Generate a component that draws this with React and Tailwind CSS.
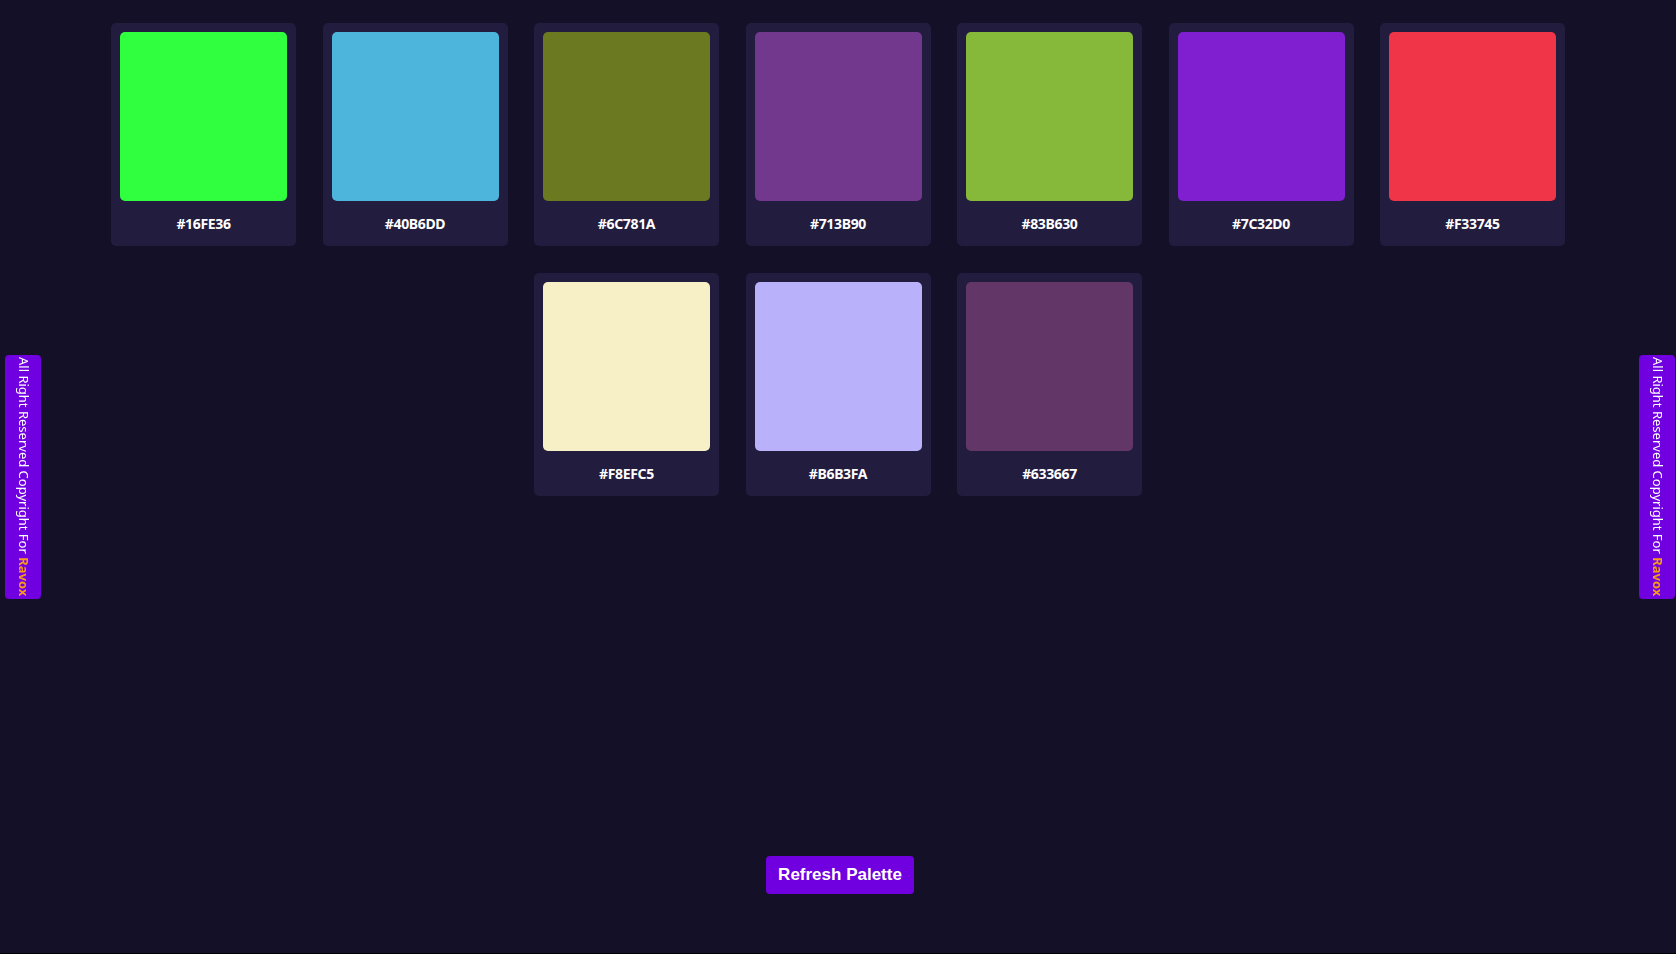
import React from "react";

const palette = [
  { hex: "#16FE36", shown: "#2fff3e" },
  { hex: "#40B6DD", shown: "#4db5dc" },
  { hex: "#6C781A", shown: "#6b7a20" },
  { hex: "#713B90", shown: "#72388e" },
  { hex: "#83B630", shown: "#86b83a" },
  { hex: "#7C32D0", shown: "#7f1fd0" },
  { hex: "#F33745", shown: "#f03548" },
  { hex: "#F8EFC5", shown: "#f7f0c7" },
  { hex: "#B6B3FA", shown: "#b9b2fa" },
  { hex: "#633667", shown: "#633668" },
];

function SideNote({ side }) {
  return (
    <div
      className={`fixed top-1/2 -translate-y-1/2 ${
        side === "left" ? "left-[5px]" : "right-px"
      } w-[36px] h-[244px] rounded-[4px] bg-[#7000e0] flex items-center justify-center`}
    >
      <span className="[writing-mode:vertical-rl] text-[13px] leading-none text-white font-['Noto_Sans',sans-serif] whitespace-nowrap">
        All Right Reserved Copyright For{" "}
        <span className="font-bold text-[#f89a1c]">Ravox</span>
      </span>
    </div>
  );
}

export default function App() {
  return (
    <div className="min-h-screen h-[954px] bg-[#131027] border-b border-black flex flex-col font-['Noto_Sans',sans-serif]">
      {/* Palette grid */}
      <div className="flex flex-wrap justify-center gap-x-[26.5px] gap-y-[27px] pt-[23px] px-[100px]">
        {palette.map((c) => (
          <div
            key={c.hex}
            className="w-[185px] h-[223px] rounded-[5px] bg-[#221c3e] p-[9px] flex flex-col"
          >
            <div
              className="w-[167px] h-[169px] rounded-[5px]"
              style={{ backgroundColor: c.shown }}
            />
            <div className="flex-1 flex items-center justify-center pt-[8px] text-white text-[14px] font-bold tracking-tight">
              {c.hex}
            </div>
          </div>
        ))}
      </div>

      {/* Refresh button */}
      <div className="flex justify-center mt-auto mb-[59px]">
        <button className="h-[38px] px-[12px] rounded-[4px] bg-[#7000e0] text-white text-[17px] font-bold font-['Liberation_Sans',Arial,sans-serif] ml-[4px]">
          Refresh Palette
        </button>
      </div>

      <SideNote side="left" />
      <SideNote side="right" />
    </div>
  );
}
